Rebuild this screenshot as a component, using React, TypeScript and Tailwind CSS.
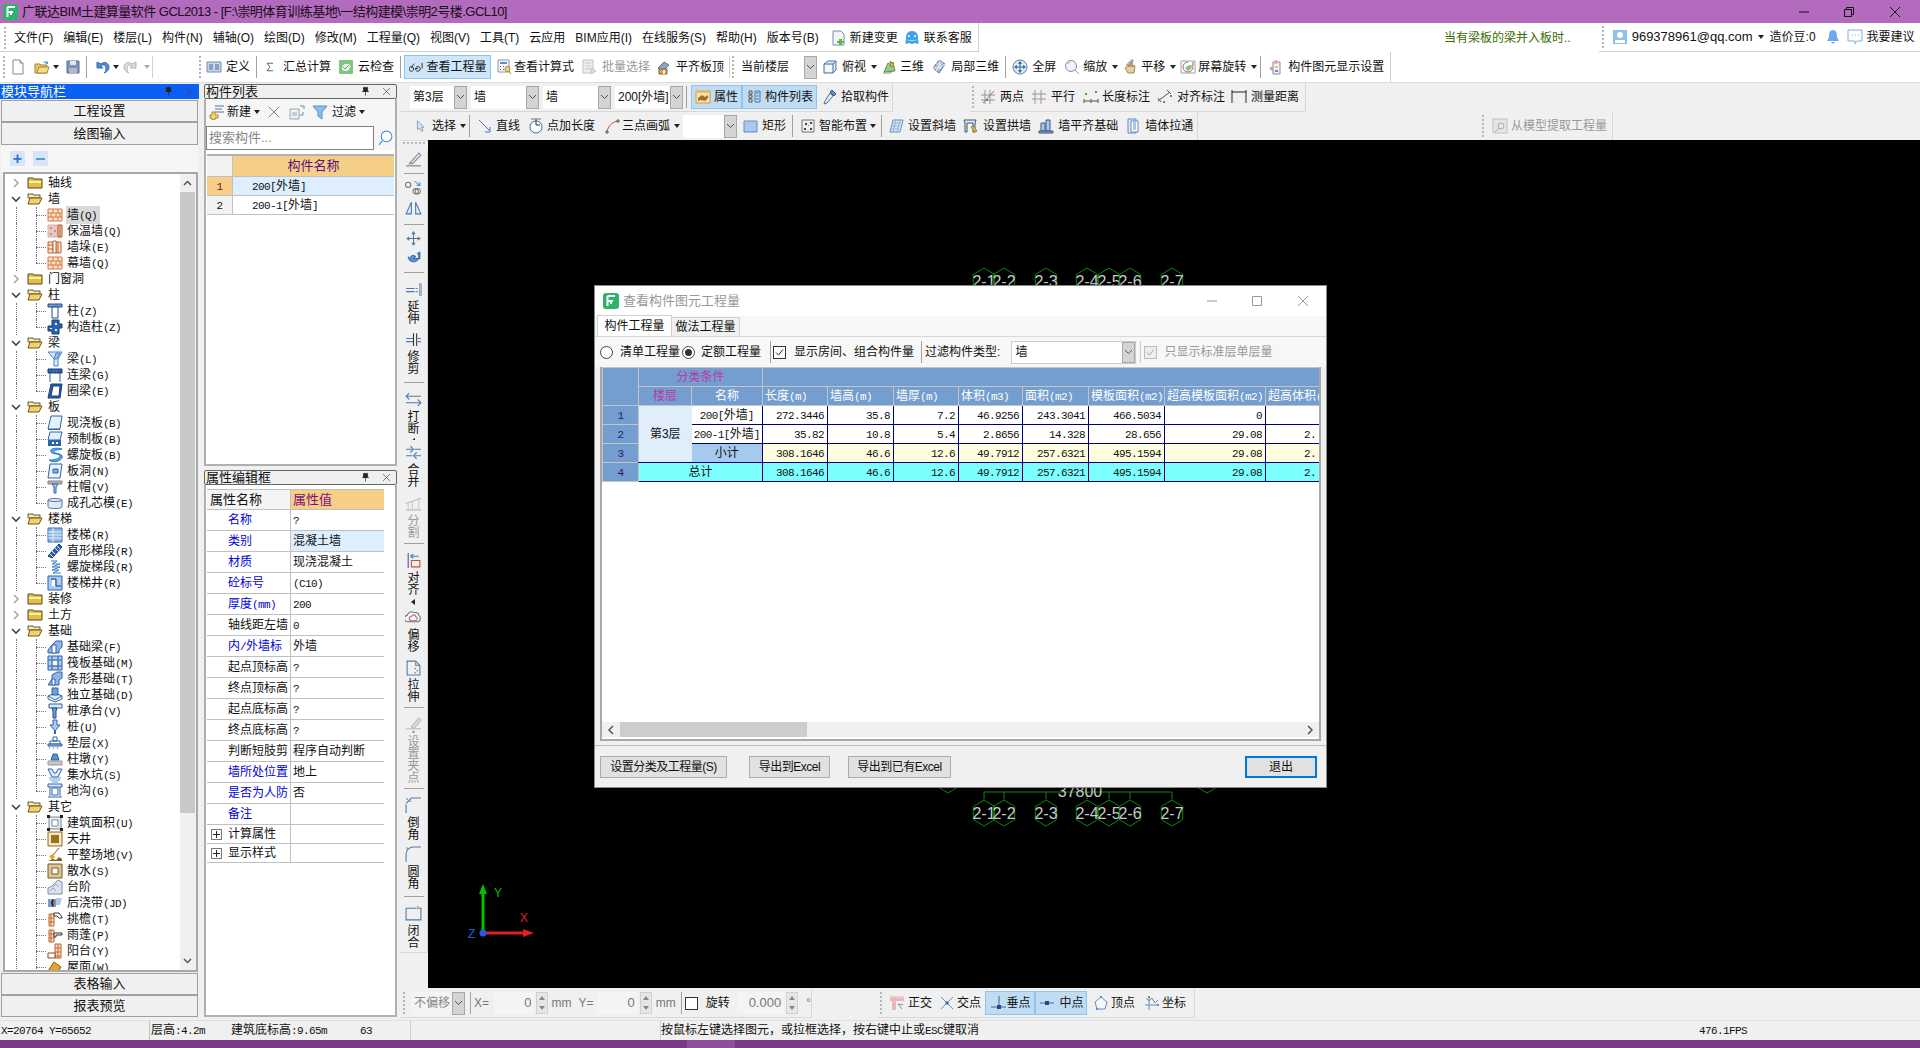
import React from "react";

type PD = [string, string?, string?];
const IC: Record<string, PD[]> = {
  newdoc: [["M3 1h7l3 3v11H3z", "#fff", "#888"], ["M10 1v3h3", "#eee", "#888"]],
  open: [["M1 5h5l1 1h6v8H1z", "#e9c46a", "#a8862a"], ["M3 14l2-6h10l-2 6z", "#f6dc8e", "#a8862a"], ["M9 4c1-2 3-2 4-1l1-1v3h-3l1-1c-1-1-2 0-3 0z", "#5b9bd5"]],
  save: [["M2 2h12v12H2z", "#7f93b8", "#5a6c8f"], ["M5 2h6v4H5z", "#dfe6f0"], ["M4 9h8v5H4z", "#aebad0"]],
  undo: [["M3 3v6h6L7 7c2-2 5-1 5 3 0 2-1 3-2 4 3-1 5-3 5-6 0-4-5-6-8-3z", "#4f8fd0", "#3a70a8", ]],
  redo: [["M13 3v6H7l2-2c-2-2-5-1-5 3 0 2 1 3 2 4-3-1-5-3-5-6 0-4 5-6 8-3z", "#d8dde2", "#b0b6bc"]],
  def: [["M1 3h14v10H1z", "#c8d8ec", "#6f8fb8"], ["M3 6h4M3 8h4M3 10h4M9 6h4M9 8h4M9 10h4", "none", "#4a6a98"]],
  sigma: [["M12 3H4l4 5-4 5h8", "none", "#333", ]],
  cloud: [["M2 1h12a1 1 0 011 1v12a1 1 0 01-1 1H2a1 1 0 01-1-1V2a1 1 0 011-1z", "#7fc47f"], ["M4 9c0-3 3-5 6-4 2 0 3 2 2 4s-2 3-4 3-4 0-4-3z", "#eaf7ea"], ["M5 8l2 2 4-4", "none", "#59a859"]],
  glasses: [["M5 9.500a2.500 2.500 0 100 .01zM12 9.500a2.500 2.500 0 100 .01z", "none", "#222"], ["M7.500 9h2M3 9c0-2 1-4 3-5M14 9V3", "none", "#222"]],
  calc: [["M2 1h11v12H2z", "#f4f6fa", "#8a93a5"], ["M4 3h7v2H4z", "#5f8fc4"], ["M4 7h1v1H4zM7 7h1v1H7zM10 7h1v1h-1zM4 10h1v1H4zM7 10h1v1H7z", "#666"], ["M9 10a2.500 2.500 0 105 0 2.500 2.500 0 10-5 0z", "#f6d77a", "#a8862a"], ["M13 12l2 3", "none", "#a8862a"]],
  batch: [["M2 1h10v13H2z", "#eee", "#c2c2c2"], ["M4 4h6M4 7h6M4 10h6", "none", "#c8c8c8"], ["M10 9l5 3-5 3z", "#ddd", "#c4c4c4"]],
  flat: [["M2 9l6-6 5 3-6 6z", "#8ea6c4", "#60738e"], ["M3 10h8v5H3z", "#d6a35c", "#8c6228"], ["M7 11h2v4H7z", "#f3efe0"]],
  cube: [["M2 5l4-3h8v9l-3 3H2z", "#dce9f6", "#50729c"], ["M2 5h9v9M11 5l3-3", "none", "#50729c"], ["M3 6h7v7H3z", "#f2f7fc"]],
  three: [["M3 13l4-9 3 2 2-3 2 9z", "#9cc98a", "#5c8f4a"], ["M9 2l4 4-3 2z", "#e8c85c", "#9a7d20"], ["M2 14h8v-3", "none", "#8c8c8c"]],
  local: [["M8 1l6 4-6 9-6-5z", "#a8bdd4", "#5a7596"], ["M8 1l1 8-7 0M9 9l5-4M5 3l4 6M11 3l-6 9", "none", "#e8eff6"]],
  full: [["M8 1a7 7 0 100 14A7 7 0 108 1z", "#dde8f5", "#5f7fa8"], ["M8 3v10M3 8h10", "none", "#3a66a0"], ["M8 2l2 3H6zM8 14l2-3H6zM2 8l3-2v4zM14 8l-3-2v4z", "#3a66a0"]],
  zoom: [["M7 1.500a5.500 5.500 0 100 11 5.500 5.500 0 100-11z", "#eef4fb", "#7d8fa8"], ["M11 11l4 4", "none", "#b89a50"], ["M4 5a3 3 0 012-2", "none", "#8cb0d8"]],
  hand: [["M3 9l2-1V5l1 0 1 3V3l1 0 1 5V3h1l1 5 1-2 1 1-1 7H6z", "#e8cfa0", "#a08858"], ["M10 0v4M8 2h4", "none", "#7d8fa8"]],
  spin: [["M1 2h14v12H1z", "#fff", "#7fa8d0"], ["M8 3a5 5 0 105 5", "none", "#d84f40"], ["M13 3v4H9", "none", "#d84f40"], ["M5 9l4-3 3 3-4 3z", "#7fc47f"]],
  disp: [["M5 3h7v12H5z", "#f2f2f8", "#8a8aa0"], ["M8 1a2 2 0 100 4 2 2 0 100-4z", "#e8a89c"], ["M7 7h3v2H7z", "#e8c85c"], ["M7 11h3v2H7z", "#5f8fc4"], ["M1 9l4-2v6z", "#c8a0a0"]],
  attr: [["M1 2h14v12H1z", "#ffe2a8", "#d09a40"], ["M3 9l4-3 3 2 3-2v3l-3 3-4-1-3 1z", "#9a7030"], ["M1 2h14v2H1z", "#f0b860"]],
  list: [["M3 2h3v3H3zM3 6h3v3H3zM3 10h3v3H3z", "none", "#555"], ["M9 2h5v11H9z", "none", "#5a7596"], ["M10 4h3M10 7h3M10 10h3", "none", "#5a7596"]],
  dropper: [["M11 1l4 4-2 2-4-4z", "#6f8fb8", "#40587c"], ["M9 4l3 3-6 7-3 1 1-3z", "#dce9f6", "#5a7596"]],
  two: [["M3 14L14 2", "none", "#d85050"], ["M1 6h14M1 11h14M5 1v14M10 1v14", "none", "#8a93a5"], ["M6 10h2v2H6z", "#50a050"]],
  para: [["M4 1v14M10 1v14", "none", "#d08080"], ["M1 5h14M1 10h14", "none", "#8a93c5"]],
  lenm: [["M1 12h14M1 10v4M15 10v4M8 10v4", "none", "#555"], ["M2 4h2v2H2zM12 2h2v2h-2z", "#50a050"]],
  alm: [["M1 12L13 3", "none", "#555", ], ["M10 1l4 4M1 9l3 4", "none", "#555"], ["M6 12h2v2H6zM13 6h2v2h-2z", "#50a050"]],
  meas: [["M1 3h14M1 1v13M15 1v13", "none", "#222"], ["M1 13h2M13 13h2", "none", "#bbb"]],
  cursor: [["M3 1v11l3-2 2 4 2-1-2-4h3z", "#dde8f5", "#7d8fa8"]],
  line: [["M2 2l11 11", "none", "#4a7ab0"], ["M13 9v5H8", "none", "#4a7ab0"]],
  ptlen: [["M8 3a6 6 0 10.01 0z", "#fff", "#3a66a0"], ["M8 1v6h4", "none", "#333"], ["M3 1h10", "none", "#777"]],
  arc: [["M2 14C3 8 7 4 13 3", "none", "#c05040"], ["M1 13h2v2H1zM12 2h2v2h-2z", "#fff", "#555"]],
  rect: [["M2 3h13v11H2z", "#a9c8f0", "#5f8fc4"]],
  smart: [["M2 2h12v12H2z", "none", "#777"], ["M5 5h2v2H5zM10 4h2v2h-2zM4 10h2v2H4zM10 10h2v2h-2z", "#444"], ["M8 7h1v1H8z", "#5080c0"]],
  slant: [["M5 2h10l-3 12H2z", "#dce9f6", "#5f8fc4"], ["M5 5h8M4 8h8M3 11h8M8 2l-3 12M12 2L9 14", "none", "#8fb0d8"]],
  arch: [["M2 2h12l-1 3v9h-2V5H5v9H3V5z", "#dce9f6", "#40587c"], ["M9 9l4 5 2-1-4-5z", "#e8c85c", "#9a7d20"]],
  walla: [["M3 5h4v8H3zM8 2h4v11H8z", "#a9c8f0", "#40587c"], ["M1 13h14v2H1z", "#7fa8d0", "#40587c"]],
  thru: [["M3 1h8v14H3z", "#dce9f6", "#5f8fc4"], ["M6 3h7v11H6z", "#fff", "#5f8fc4"], ["M8 5h3M8 7h3M8 9h3M8 11h3", "none", "#5f8fc4"]],
  model: [["M1 1h14v14H1z", "#e6e6e6", "#c0c0c0"], ["M9 5a3 3 0 100 6 3 3 0 100-6z", "none", "#aaa"], ["M7 10l-4 4", "none", "#aaa"]],
  plusnew: [["M6 2h9M6 5h7M6 8h9", "none", "#5a7596"], ["M3 8h3v3h3v3H6v2H3v-2H1v-3h2z", "#f0d878", "#a8862a"]],
  del: [["M2 2l12 12M14 2L2 14", "none", "#777"]],
  copy: [["M1 5h9v10H1z", "#f0f0f4", "#9aa"], ["M3 9h5M3 11h5", "none", "#9aa"], ["M11 2h4v3", "none", "#5f8fc4"], ["M14 8v3h-3", "none", "#5f8fc4"]],
  funnel: [["M1 2h14L10 8v7L6 12V8z", "#8fbce8", "#5f8fc4"]],
  search: [["M9 2a5 5 0 100 10 5 5 0 100-10z", "#fff", "#3e92dd"], ["M5 11l-3 4", "none", "#3e92dd"]],
  brush: [["M1 14h14", "none", "#777"], ["M5 11l8-9 2 2-8 8z", "#dde8f5", "#8a93a5"], ["M3 13l2-3 2 2z", "#c76a9a"]],
  offs: [["M3 3a2.500 2.500 0 100 5 2.500 2.500 0 100-5zM10 9a2.500 2.500 0 100 5 2.500 2.500 0 100-5zM12 9a2.500 2.500 0 100 5 2.500 2.500 0 100-5z", "none", "#777"], ["M9 2l5 4M14 3v3h-3", "none", "#5f8fc4"]],
  mirror: [["M6 3L1 14h5zM10 3l5 11h-5z", "#dce9f6", "#4a7ab0"]],
  move: [["M8 2v12M2 8h12", "none", "#5a7596"], ["M8 1l2 3H6zM8 15l2-3H6zM1 8l3-2v4zM15 8l-3-2v4z", "#5a7596"]],
  rot: [["M3 8a5 5 0 109-3l2-1v6h-6l2-2a3 3 0 10-2 5", "#5f9ad8", "#3a70a8"]],
  ext: [["M1 7h8M1 10h8", "none", "#4a7ab0"], ["M10 7h2M10 10h2", "none", "#888"], ["M14 2v12M16 2v12", "none", "#4a7ab0"]],
  trim: [["M1 7h7M1 10h7M12 7h3M12 10h3", "none", "#4a7ab0"], ["M8 2v12M11 2v12", "none", "#333"]],
  brk: [["M1 5h14M1 11h14", "none", "#4a7ab0"], ["M4 2l-3 3 3 3M12 8l3 3-3 3", "none", "#4a7ab0"]],
  merge: [["M1 11h6M9 11h6M1 5h6M9 5h6", "none", "#4a7ab0"], ["M5 2l3 3-3 3M11 8l-3 3 3 3", "none", "#4a7ab0"]],
  split: [["M1 14h14M1 8l14-5", "none", "#bbb"], ["M3 8v6M13 4v10M7 6v8", "none", "#ccc"]],
  alignv: [["M3 1v14", "none", "#4a50a0"], ["M5 4h8M5 4l3-2M5 4l3 2", "none", "#4a7ab0"], ["M6 8h8v6H6z", "none", "#c05040"]],
  offc: [["M3 12a3 3 0 01-1-6c1-3 4-4 6-3 3 0 5 1 5 3 2 1 2 6-1 6z", "#f4f7fb", "#5a7596"], ["M6 11a2 2 0 010-4c1-2 4-2 4 0 2 0 2 4 0 4z", "none", "#d06050"]],
  stretch: [["M2 2h8l4 4v9H2z", "none", "#4a7ab0"], ["M10 2v4h4", "none", "#888"], ["M9 9h1M11 11h1M9 13h1", "none", "#333"]],
  gripv: [["M1 12h14", "none", "#bbb"], ["M6 10l7-8 2 2-7 8z", "#ddd", "#bbb"], ["M7 14h2v2H7z", "#999"]],
  cham: [["M1 15V7M1 4h0M1 6l5-5h9", "none", "#4a7ab0"], ["M1 2h2M4 4h2", "none", "#888"]],
  fill: [["M1 15V8C1 4 4 1 8 1h7", "none", "#4a7ab0"], ["M1 2h2", "none", "#888"]],
  closeg: [["M1 3h14v11H1z", "none", "#4a7ab0"], ["M10 3h3", "none", "#eee"], ["M12 1v3", "none", "#888"]],
  ortho: [["M1 2h14M4 2v13", "none", "#e8a8a8"], ["M1 3h14v3H7v9H3V6H1z", "#e8b8b8"], ["M9 9l4 5M9 9l5 1", "none", "#7d8fa8"]],
  cross: [["M2 2l12 12M14 2L2 14", "none", "#5f8fc4"], ["M6 8l2-2 2 2-2 2z", "#3a66a0"]],
  perp: [["M1 12h15", "none", "#3a66a0"], ["M9 1v11", "none", "#3a66a0"], ["M7 10h4v4H7z", "#224a88"]],
  mid: [["M1 8h14", "none", "#3a66a0"], ["M6 6h4v4H6z", "#224a88"]],
  vert: [["M8 2l6 5-2 7H4L2 7z", "#f4f7fb", "#5f8fc4"], ["M7 1h2v2H7zM3 13h2v2H3z", "#5f8fc4"]],
  coord: [["M5 15V2M1 10h14", "none", "#5f8fc4"], ["M2 3l3 3 3-3 3 5 3-3", "none", "#888"], ["M4 1h2v2H4zM13 9h2v2h-2z", "#5f8fc4"]],
  user: [["M1 1h14v14H1z", "#8fc2e8"], ["M8 3a2.500 2.500 0 100 6 2.500 2.500 0 100-6z", "#fff"], ["M3 11h10v3H3z", "#fff"]],
  bell: [["M8 1c3 0 4 3 4 6 0 2 1 3 2 5H2c1-2 2-3 2-5 0-3 1-6 4-6z", "#6ea8ee"], ["M6 13h4l-2 2z", "#6ea8ee"]],
  bubble: [["M1 1h14v11h-5l-2 3v-3H1z", "#fff", "#7fb0e0"], ["M5 6h1M8 6h1M11 6h1", "none", "#7fb0e0"]],
  newchg: [["M3 1h8l3 3v11H3z", "#f2f6fb", "#6f8fb8"], ["M9 9h3v2h2v2h-2v2H9v-2H7v-2h2z", "#62b050"]],
  qq: [["M8 1c4 0 6 3 6 6 0 4 1 6 0 7l-3-1-3 1-3-1-3 1c-1-1 0-3 0-7 0-3 2-6 6-6z", "#3ea2e8"], ["M5 5a1 1 0 100 2 1 1 0 100-2zM11 5a1 1 0 100 2 1 1 0 100-2z", "#fff"], ["M3 9c3 2 7 2 10 0-2 3-8 3-10 0z", "#fff"]],
  brick: [["M1 2h14v12H1z", "#fbe3cf", "#d47a3c"], ["M1 6h14M1 10h14M6 2v4M11 2v4M4 6v4M9 6v4M13 6v4M6 10v4M11 10v4", "none", "#d47a3c"]],
  insul: [["M1 2h10v12H1z", "#e9c6c0", "#e0b0a8"], ["M3 4h2v2H3zM7 7h2v2H7zM3 10h2v2H3z", "#c9928a"], ["M11 2h4v12h-4zM13 2v12", "#f5d9c8", "#b05a28"]],
  pier: [["M1 3h5v11H1zM9 3h5v11H9z", "#fbe3cf", "#c0622a"], ["M6 2h3v12H6z", "#fff", "#c0622a"], ["M1 6h5M1 10h5M11 3v11", "none", "#c0622a"]],
  tcol: [["M1 1h14v3H1z", "#6f9fd8", "#224a88"], ["M5 4h6v11H5z", "#fff", "#224a88"]],
  gcol: [["M5 1h7v4h3v4h-3v6H5v-3H1V7h4z", "#2f62ad", "#163a78"], ["M8 4h2v2H8zM8 10h2v2H8zM3 9h2v1H3z", "#eaf2fb"]],
  beam: [["M1 1h14l-4 7v7H7V8z", "#dbeafb", "#4a86c8"], ["M9 2l-2 6 3 0 3-6z", "#8fc0ee", "#4a86c8"]],
  lbeam: [["M1 2h14v4H1z", "#2f62ad", "#163a78"], ["M3 6v9M13 6v9M6 3h1v2H6zM9 3h1v2H9z", "#eaf2fb", "#2f62ad"]],
  ring: [["M4 1h11l-2 14H1z", "#2f62ad", "#163a78"], ["M6 3h7l-1 10H4z", "#fff", "#163a78"]],
  slab: [["M4 1h11l-2 13H1z", "#e4f0fc", "#2f62ad"], ["M1 14h12v1H1z", "#2f62ad"]],
  preslab: [["M3 1h12l-2 8H1z", "#e4f0fc", "#2f62ad"], ["M1 9h13v6H1z", "#2f62ad"], ["M5 11h2v2H5zM9 11h2v2H9z", "#fff"]],
  spir: [["M15 2C8 0 2 2 4 5c2 3 9 1 9 4 0 3-7 4-11 4 3 3 11 2 13-2 2-5-7-4-8-6-1-2 4-2 8-3z", "#58a8ec", "#2878c8"]],
  hole: [["M3 1h12l-2 14H1z", "#eaf2fb", "#2f62ad"], ["M6 6h5v4H6z", "#7fb0e0", "#2f62ad"]],
  cap: [["M1 2h14v3H1z", "#b0b0b0", "#888"], ["M5 5h6l-2 3v6H7V8z", "#a8ccef", "#2f62ad"]],
  core: [["M1 5c0-2 14-2 14 0v7c0 2-14 2-14 0z", "#dceafa", "#5a7596"], ["M1 5c0 2 14 2 14 0", "none", "#5a7596"]],
  stair: [["M1 1h14v14H1z", "#8fb6e4", "#3a6ab0"], ["M1 5h14M1 8h14M1 11h14M6 1v14", "none", "#eaf2fb"]],
  stairs: [["M1 13L12 1l3 3-10 11z", "#2f62ad", "#163a78"], ["M3 11l3 3M5 8l3 3M8 5l3 3M10 3l3 3", "none", "#eaf2fb"]],
  spirs: [["M4 2h6l-5 3h8l-8 3h8l-8 3h7l-6 3h8", "none", "#2f7ed0"]],
  well: [["M1 1h14v14H1z", "#a8ccef", "#2f62ad"], ["M4 4h5v7h5", "none", "#163a78"], ["M5 5h3v6H5z", "#fff"]],
  fbeam: [["M5 6l4-4h6v6l-3 3v3H1v-3z", "#8fb6e4", "#2f62ad"], ["M5 6h4v8H5z", "#fff", "#2f62ad"]],
  raft: [["M1 1h14v14H1z", "#a8ccef", "#2f62ad"], ["M1 5h14M1 11h14M5 1v14M11 1v14", "none", "#2f62ad"], ["M6 6h4v4H6z", "#fff"]],
  strip: [["M1 14l4-6V4l5-3h5v6l-3 2v5z", "#8fb6e4", "#2f62ad"], ["M5 8h3v6H5z", "#fff", "#2f62ad"]],
  iso: [["M1 9l7-3 7 3-7 4z", "#dbeafb", "#2f62ad"], ["M1 9v3l7 3 7-3V9", "none", "#2f62ad"], ["M5 1h6v7H5z", "#6f9fd8", "#2f62ad"]],
  pcap: [["M2 1h13v4H2z", "#dbeafb", "#2f62ad"], ["M5 5h5l-1 3v7H6V8z", "#6f9fd8", "#224a88"]],
  pile: [["M6 1h4v5h3l-5 6-5-6h3z", "#a8ccef", "#2f62ad"], ["M7 12h2v3H7z", "#2f62ad"]],
  pad: [["M6 2h4v4H6zM3 6h10v3H3z", "#fff", "#2f62ad"], ["M1 9h14v2H1z", "#8fb6e4", "#2f62ad"], ["M3 12l-1 2M7 12l-1 2M11 12l-1 2", "none", "#6f9fd8"]],
  dun: [["M6 3h4l2 6H4z", "#5f8fd0", "#2f62ad"], ["M1 10h14v4H1z", "#c8c8c8", "#999"]],
  sump: [["M1 2h4l2 4h2l2-4h4l-4 8H5z", "#dbeafb", "#2f62ad"], ["M2 11h12M3 13h10M5 15h6", "none", "#6f9fd8"]],
  trench: [["M1 1h14v3H1z", "#dbeafb", "#2f62ad"], ["M3 4v9M13 4v9M1 14h14", "none", "#2f62ad"], ["M5 5h6v7H5z", "#fff", "#2f62ad"]],
  area: [["M2 2h12v12H2z", "#e4e8f2", "#888"], ["M5 5h6v6H5z", "#fff", "#7d8fa8"], ["M0 0h3v3H0zM13 0h3v3h-3zM0 13h3v3H0zM13 13h3v3h-3z", "#222"]],
  sky: [["M1 1h14v14H1z", "#f6e8c4", "#8a6a20"], ["M4 4h8v8H4z", "#9a7418"]],
  site: [["M12 1L6 8", "none", "#7a5c20"], ["M2 9l4-2 2 3-3 3z", "#e0a820"], ["M1 14l5-2 3 1 3-3 3 2v2H1z", "#8a5a30"]],
  apron: [["M1 1h14v14H1z", "#dcc49a", "#7a5c20"], ["M5 5h6v6H5z", "#fff", "#7a5c20"]],
  steps: [["M1 15V9l4-2 6-6 4 2v12z", "#dbe4ee", "#7d8fa8"], ["M3 12l3-3 3 3M6 8l3-3 3 3", "none", "#8fa8c4"]],
  pour: [["M1 4h8v8H1z", "#6f9fd8"], ["M9 3h6l-2 7H9z", "#a8ccef"], ["M6 4c2 2 2 5 0 8-2-1-3-6 0-8z", "#3a2418"], ["M6 6h2v4H6z", "#d86030"]],
  eave: [["M2 3h5v12H2z", "#fbe3cf", "#c0622a"], ["M2 7h5M2 11h5M4 3v12", "none", "#c0622a"], ["M7 2h5l3 4v1h-3l-2-2H7z", "#fff", "#333"]],
  canopy: [["M2 3h5v12H2z", "#fbe3cf", "#c0622a"], ["M2 7h5M2 11h5M4 3v12", "none", "#c0622a"], ["M7 6h8v2H9v2H7z", "#fff", "#333"]],
  balc: [["M8 1h6v14H8z", "#fbe3cf", "#c0622a"], ["M8 5h6M8 9h6M8 13h6M11 1v14", "none", "#c0622a"], ["M1 10h7v5H1z", "#fff", "#8a4a20"]],
  roof: [["M1 12l6-9 7 5-3 5z", "#e8a030", "#8a5a10"], ["M1 12h10v3H1z", "#fff", "#888"], ["M13 11h1v3h-1z", "#c03030"]],
  pin: [["M5 2h6v6H5zM3 8h10M8 8v6", "#222", "#222"]],
  x: [["M3 3l10 10M13 3L3 13", "none", "#444"]],
};

function I({ n, s = 16, c = "" }: { n: string; s?: number; c?: string }) {
  return (
    <svg viewBox="0 0 16 16" width={s} height={s} className={`shrink-0 ${c}`}>
      {IC[n].map((p, i) => (
        <path key={i} d={p[0]} fill={p[1] ?? "none"} stroke={p[2] ?? "none"} strokeWidth={1} />
      ))}
    </svg>
  );
}
const Caret = ({ c = "" }: { c?: string }) => <span className={`shrink-0 w-0 h-0 border-x-[3px] border-x-transparent border-t-[4px] border-t-[#222] ${c}`} />;
const Sep = ({ c = "" }: { c?: string }) => <span className={`shrink-0 w-px h-[22px] bg-[#a0a0a0] ${c}`} />;
const Grip = ({ c = "" }: { c?: string }) => <span className={`shrink-0 w-[2px] h-[22px] border-l-2 border-dotted border-[#b5b5b5] ${c}`} />;
const Tx = ({ c = "", children }: { c?: string; children: React.ReactNode }) => <span className={`shrink-0 whitespace-nowrap ${c}`}>{children}</span>;

function Sim({ t, c = "" }: { t: string; c?: string }) {
  const parts = t.split(/([\x00-\x7f]+)/).filter(Boolean);
  return (
    <span className={`whitespace-pre ${c}`}>
      {parts.map((p, i) =>
        /^[\x00-\x7f]/.test(p) ? (
          <span key={i} className="font-['Liberation_Mono',monospace] text-[11px] tracking-[-0.6px]">{p}</span>
        ) : (
          <span key={i}>{p}</span>
        )
      )}
    </span>
  );
}

function Combo({ t, c = "", off = false }: { t: string; c?: string; off?: boolean }) {
  return (
    <div className={`shrink-0 h-[23px] flex items-center bg-white ${c}`}>
      <span className={`flex-1 min-w-0 overflow-hidden whitespace-nowrap pl-[3px] ${off ? "text-[#8a8a8a]" : ""}`}>{t}</span>
      <span className="w-[13px] h-full shrink-0 bg-[#d4d4d4] border border-[#a8a8a8] flex items-center justify-center">
        <svg width="9" height="6" viewBox="0 0 9 6"><path d="M1 1l3.500 3.500L8 1" fill="none" stroke="#555" /></svg>
      </span>
    </div>
  );
}

type Row = [number, string, string?];
const TREE: Row[] = [
  [0, "轴线"], [1, "墙"], [2, "墙(Q)", "brick"], [2, "保温墙(Q)", "insul"], [2, "墙垛(E)", "pier"], [3, "幕墙(Q)", "brick"],
  [0, "门窗洞"], [1, "柱"], [2, "柱(Z)", "tcol"], [3, "构造柱(Z)", "gcol"],
  [1, "梁"], [2, "梁(L)", "beam"], [2, "连梁(G)", "lbeam"], [3, "圈梁(E)", "ring"],
  [1, "板"], [2, "现浇板(B)", "slab"], [2, "预制板(B)", "preslab"], [2, "螺旋板(B)", "spir"], [2, "板洞(N)", "hole"], [2, "柱帽(V)", "cap"], [3, "成孔芯模(E)", "core"],
  [1, "楼梯"], [2, "楼梯(R)", "stair"], [2, "直形梯段(R)", "stairs"], [2, "螺旋梯段(R)", "spirs"], [3, "楼梯井(R)", "well"],
  [0, "装修"], [0, "土方"],
  [1, "基础"], [2, "基础梁(F)", "fbeam"], [2, "筏板基础(M)", "raft"], [2, "条形基础(T)", "strip"], [2, "独立基础(D)", "iso"], [2, "桩承台(V)", "pcap"], [2, "桩(U)", "pile"], [2, "垫层(X)", "pad"], [2, "柱墩(Y)", "dun"], [2, "集水坑(S)", "sump"], [3, "地沟(G)", "trench"],
  [1, "其它"], [2, "建筑面积(U)", "area"], [2, "天井", "sky"], [2, "平整场地(V)", "site"], [2, "散水(S)", "apron"], [2, "台阶", "steps"], [2, "后浇带(JD)", "pour"], [2, "挑檐(T)", "eave"], [2, "雨蓬(P)", "canopy"], [2, "阳台(Y)", "balc"], [2, "屋面(W)", "roof"],
];

function Folder({ open }: { open: boolean }) {
  return (
    <svg width="16" height="14" viewBox="0 0 16 14" className="shrink-0">
      {open ? (
        <>
          <path d="M1 2h5l1 1h6v3H1z" fill="#f4e6b8" stroke="#6a5a20" />
          <path d="M1 12l2-6h12l-3 6z" fill="#f2cf70" stroke="#6a5a20" />
        </>
      ) : (
        <>
          <path d="M1 2h5l1 1h8v9H1z" fill="#e6bc4c" stroke="#5a4a10" />
          <path d="M2 5h12v2H2z" fill="#fbeeb8" />
        </>
      )}
    </svg>
  );
}

function Tree() {
  return (
    <div className="flex-1 min-w-0 overflow-hidden bg-white pt-[1px]">
      {TREE.map((r, i) => {
        const [k, t, ic] = r;
        const sel = i === 2;
        if (k < 2)
          return (
            <div key={i} className="relative h-[16px] flex items-center">
              <span className="w-[22px] shrink-0 flex justify-center">
                <svg width="10" height="10" viewBox="0 0 10 10">
                  {k === 0 ? <path d="M3 1l4 4-4 4" fill="none" stroke="#aaa" strokeWidth="1.600" /> : <path d="M1 3l4 4 4-4" fill="none" stroke="#444" strokeWidth="1.600" />}
                </svg>
              </span>
              <Folder open={k === 1} />
              <Sim t={t} c="ml-[5px]" />
            </div>
          );
        return (
          <div key={i} className="relative h-[16px] flex items-center pl-[42px]">
            <span className="absolute left-[11px] top-0 bottom-0 border-l border-dotted border-[#777]" />
            <span className={`absolute left-[31px] top-0 border-l border-dotted border-[#777] ${k === 3 ? "h-[8px]" : "h-[16px]"}`} />
            <span className="absolute left-[31px] top-[8px] w-[10px] border-t border-dotted border-[#777]" />
            <I n={ic as string} />
            <Sim t={t} c={`ml-[3px] pl-[1px] pr-[3px] ${sel ? "bg-[#d9d9d9]" : ""}`} />
          </div>
        );
      })}
    </div>
  );
}

function PanelTitle({ t, blue }: { t: string; blue?: boolean }) {
  return (
    <div className={`h-[15px] shrink-0 flex items-center text-[13px] leading-[15px] ${blue ? "bg-[#0b5ff2] text-white" : "bg-[#efefef] border border-[#666] rounded-[2px]"}`}>
      <span className="flex-1 pl-[1px]">{t}</span>
      <I n="pin" s={11} />
      <I n="x" s={11} c="ml-[10px] mr-[4px]" />
    </div>
  );
}

function SideBtn({ t, c = "" }: { t: string; c?: string }) {
  return <div className={`shrink-0 mx-[1px] flex items-center justify-center border border-[#a0a0a0] bg-[#f0f0f0] text-[13px] ${c}`}>{t}</div>;
}

const PROPS: [string, string, boolean][] = [
  ["名称", "?", true], ["类别", "混凝土墙", true], ["材质", "现浇混凝土", true], ["砼标号", "(C10)", true], ["厚度(mm)", "200", true],
  ["轴线距左墙", "0", false], ["内/外墙标", "外墙", true], ["起点顶标高", "?", false], ["终点顶标高", "?", false], ["起点底标高", "?", false],
  ["终点底标高", "?", false], ["判断短肢剪", "程序自动判断", false], ["墙所处位置", "地上", true], ["是否为人防", "否", true], ["备注", "", true],
];

type VT = { n?: string; t?: string; off?: boolean; arrow?: boolean; c: string };
const VTOOLS: (VT | null)[] = [
  { n: "brush", c: "h-[19px]" }, null,
  { n: "offs", c: "h-[20px]" }, { n: "mirror", c: "h-[22px]" }, null,
  { n: "move", c: "h-[18px]" }, { n: "rot", c: "h-[21px]" }, null,
  { n: "ext", t: "延伸", c: "h-[50px]" }, { n: "trim", t: "修剪", c: "h-[51px]" }, null,
  { n: "brk", t: "打断", arrow: true, c: "h-[53px]" }, { n: "merge", t: "合并", c: "h-[51px]" },
  { n: "split", t: "分割", off: true, c: "h-[48px]" }, null,
  { n: "alignv", t: "对齐", arrow: true, c: "h-[57px]" }, { n: "offc", t: "偏移", c: "h-[50px]" }, { n: "stretch", t: "拉伸", c: "h-[48px]" }, null,
  { n: "gripv", t: "设置夹点", off: true, c: "h-[72px]" }, null,
  { n: "cham", t: "倒角", c: "h-[49px]" }, { n: "fill", t: "圆角", c: "h-[50px]" }, null,
  { n: "closeg", t: "闭合", c: "h-[50px]" },
];

function VToolbar() {
  return (
    <div className="w-[28px] shrink-0 h-full bg-[#f0f0f0] border-t border-[#ddd]">
      <div className="h-[8px] mx-[3px] border-t-2 border-dotted border-[#bbb] mt-[1px]" />
      <div className="border-r border-b border-[#d8d8d8] pb-[1px]">
        {VTOOLS.map((v, i) =>
          v === null ? (
            <div key={i} className="h-[9px] flex items-center justify-center shrink-0"><span className="w-[20px] h-px bg-[#a0a0a0]" /></div>
          ) : (
            <div key={i} className={`flex flex-col items-center overflow-hidden ${v.t ? "pt-[4px]" : "pt-[1px]"} ${v.c}`}>
              <I n={v.n as string} s={17} />
              {v.t && (
                <div className={`mt-[3px] flex flex-col items-center text-[12px] leading-[12px] ${v.off ? "text-[#999]" : ""}`}>
                  {v.t.split("").map((ch, j) => <span key={j}>{ch}</span>)}
                  {v.arrow && <span className="mt-[3px] w-0 h-0 border-y-[3px] border-y-transparent border-r-[4px] border-r-[#222]" />}
                </div>
              )}
            </div>
          )
        )}
      </div>
    </div>
  );
}

function Spin({ c = "" }: { c?: string }) {
  return (
    <span className={`shrink-0 w-[12px] h-[22px] flex flex-col bg-[#e6e6e6] border border-[#d0d0d0] items-center justify-around ${c}`}>
      <span className="w-0 h-0 border-x-[3px] border-x-transparent border-b-[4px] border-b-[#888]" />
      <span className="w-0 h-0 border-x-[3px] border-x-transparent border-t-[4px] border-t-[#888]" />
    </span>
  );
}

const HEX_X = [984, 1004, 1046, 1087, 1109, 1130, 1172];
function hexPts(cx: number, cy: number) {
  const r = 13;
  return [0, 60, 120, 180, 240, 300].map((a) => {
    const t = ((a - 90) * Math.PI) / 180;
    return `${cx + r * 0.95 * Math.cos(t)},${cy + r * Math.sin(t)}`;
  }).join(" ");
}

function CanvasArt() {
  return (
    <svg className="absolute inset-0 w-full h-full" viewBox="428 140 1492 848">
      {[281, 813].map((cy) => (
        <g key={cy}>
          {HEX_X.map((x, i) => (
            <g key={x}>
              <polygon points={hexPts(x, cy)} fill="none" stroke="#0a8a0a" />
              <text x={x} y={cy + 6} fill="#c8c8c8" fontSize="16" textAnchor="middle" fontFamily="Liberation Sans">{`2-${i + 1}`}</text>
            </g>
          ))}
        </g>
      ))}
      <path d="M984 792H1172M984 792v7M1004 792v7M1046 792v7M1087 792v7M1109 792v7M1130 792v7M1172 792v7" stroke="#0a8a0a" fill="none" />
      <text x="1080" y="797" fill="#c8c8c8" fontSize="16" textAnchor="middle" fontFamily="Liberation Sans">37800</text>
      <polygon points={hexPts(948, 780)} fill="none" stroke="#0a8a0a" />
      <polygon points={hexPts(1207, 780)} fill="none" stroke="#0a8a0a" />
      <path d="M483 933V890" stroke="#00c000" strokeWidth="3" />
      <path d="M483 884l-4 10h8z" fill="#00c000" />
      <path d="M484 933H524" stroke="#e02020" strokeWidth="3" />
      <path d="M534 933l-11-4v8z" fill="#e02020" />
      <circle cx="483" cy="933" r="3.500" fill="#2060e0" />
      <text x="494" y="897" fill="#00c000" fontSize="12" fontFamily="Liberation Sans">Y</text>
      <text x="520" y="922" fill="#e02020" fontSize="12" fontFamily="Liberation Sans">X</text>
      <text x="468" y="938" fill="#2060e0" fontSize="12" fontFamily="Liberation Sans">Z</text>
    </svg>
  );
}

const TH = "border border-[#c4c4c4] font-normal text-white whitespace-nowrap overflow-hidden text-left px-[2px]";
const TD = "border-r border-b border-[#00007a] text-right pr-[3px] whitespace-nowrap overflow-hidden";
const NUM = "bg-[#739ecf] border border-[#c4c4c4] text-center text-[#2a1a70]";
const BODY: string[][] = [
  ["272.3446", "35.8", "7.2", "46.9256", "243.3041", "466.5034", "0", ""],
  ["35.82", "10.8", "5.4", "2.8656", "14.328", "28.656", "29.08", "2."],
  ["308.1646", "46.6", "12.6", "49.7912", "257.6321", "495.1594", "29.08", "2."],
  ["308.1646", "46.6", "12.6", "49.7912", "257.6321", "495.1594", "29.08", "2."],
];
const COLS = ["w-[36px]", "w-[53px]", "w-[71px]", "w-[65px]", "w-[66px]", "w-[65px]", "w-[64px]", "w-[66px]", "w-[76px]", "w-[101px]", "w-[54px]"];

function QtyTable() {
  const heads = ["长度(m)", "墙高(m)", "墙厚(m)", "体积(m3)", "面积(m2)", "模板面积(m2)", "超高模板面积(m2)", "超高体积(m3)"];
  const cell = (r: number, bg: string) => BODY[r].map((v, i) => (
    <td key={i} className={`${TD} ${bg}`}><Sim t={v} /></td>
  ));
  return (
    <table className="table-fixed border-collapse w-[717px] text-[12px] leading-[14px] bg-white">
      <colgroup>
        {COLS.map((w, i) => <col key={i} className={w} />)}
      </colgroup>
      <tbody>
        <tr className="h-[19px] bg-[#739ecf]">
          <th rowSpan={2} className={TH} />
          <th colSpan={2} className={`${TH} !text-center !text-[#b83aa0]`}>分类条件</th>
          <th colSpan={8} className={TH} />
        </tr>
        <tr className="h-[19px] bg-[#739ecf]">
          <th className={`${TH} !text-center !text-[#b83aa0]`}>楼层</th>
          <th className={`${TH} !text-center`}>名称</th>
          {heads.map((h) => <th key={h} className={TH}><Sim t={h} /></th>)}
        </tr>
        <tr className="h-[19px]">
          <td className={NUM}><Sim t="1" /></td>
          <td rowSpan={3} className="bg-[#e0eefc] text-center border-b border-[#00007a]">第3层</td>
          <td className={`${TD} !text-center !pr-0`}><Sim t="200[外墙]" /></td>
          {cell(0, "")}
        </tr>
        <tr className="h-[19px]">
          <td className={NUM}><Sim t="2" /></td>
          <td className={`${TD} !text-center !pr-0`}><Sim t="200-1[外墙]" /></td>
          {cell(1, "")}
        </tr>
        <tr className="h-[19px]">
          <td className={NUM}><Sim t="3" /></td>
          <td className={`${TD} !text-center !pr-0 bg-[#a6c9ee]`}>小计</td>
          {cell(2, "bg-[#fffde0]")}
        </tr>
        <tr className="h-[19px]">
          <td className={NUM}><Sim t="4" /></td>
          <td colSpan={2} className={`${TD} !text-center !pr-0 bg-[#7dffff]`}>总计</td>
          {cell(3, "bg-[#7dffff]")}
        </tr>
      </tbody>
    </table>
  );
}

function Modal() {
  return (
    <div className="absolute left-[166px] top-[145px] w-[733px] h-[503px] bg-[#f0f0f0] border border-[#8a8a8a] flex flex-col shadow-[0_0_4px_rgba(0,0,0,0.4)]">
      <div className="h-[30px] shrink-0 bg-white flex items-center pl-[8px] text-[13px] text-[#999]">
        <span className="w-[16px] h-[16px] rounded-[3px] bg-[#2fb36a] flex items-center justify-center">
          <svg width="10" height="12" viewBox="0 0 10 12"><path d="M1.500 1v10M1.500 1H9M1.500 6H7M5 6v3" stroke="#fff" strokeWidth="2" fill="none" /></svg>
        </span>
        <span className="ml-[4px] flex-1">查看构件图元工程量</span>
        <svg width="12" height="12" viewBox="0 0 12 12" className="mr-[33px]"><path d="M1 6h10" stroke="#999" /></svg>
        <svg width="12" height="12" viewBox="0 0 12 12" className="mr-[34px]"><path d="M1.500 1.500h9v9h-9z" stroke="#999" fill="none" /></svg>
        <svg width="12" height="12" viewBox="0 0 12 12" className="mr-[17px]"><path d="M1 1l10 10M11 1L1 11" stroke="#999" fill="none" /></svg>
      </div>
      <div className="h-[21px] shrink-0 flex items-end pl-[2px] border-b border-[#d8d8d8] bg-[#f7f7f7]">
        <div className="h-[21px] w-[75px] bg-white border border-b-0 border-[#d0d0d0] flex items-center justify-center">构件工程量</div>
        <div className="h-[19px] w-[68px] bg-[#f0f0f0] border border-b-0 border-l-0 border-[#d0d0d0] flex items-center justify-center">做法工程量</div>
      </div>
      <div className="h-[30px] shrink-0 flex items-center bg-[#f7f7f7]">
        <span className="ml-[5px] w-[13px] h-[13px] rounded-full border border-[#444] bg-white" />
        <Tx c="ml-[7px]">清单工程量</Tx>
        <span className="ml-[2px] w-[13px] h-[13px] rounded-full border border-[#444] bg-white flex items-center justify-center"><span className="w-[7px] h-[7px] rounded-full bg-[#333]" /></span>
        <Tx c="ml-[6px]">定额工程量</Tx>
        <Sep c="ml-[9px]" />
        <span className="ml-[2px] w-[13px] h-[13px] border border-[#333] bg-white flex items-center justify-center">
          <svg width="11" height="11" viewBox="0 0 11 11"><path d="M2 5.500l2.500 2.500L9 2.500" stroke="#222" fill="none" /></svg>
        </span>
        <Tx c="ml-[8px]">显示房间、组合构件量</Tx>
        <Sep c="ml-[7px]" />
        <Tx c="ml-[3px]">过滤构件类型:</Tx>
        <Combo t="墙" c="ml-[11px] w-[125px] border border-[#ccc]" />
        <Sep c="ml-[4px] !bg-[#ccc]" />
        <span className="ml-[3px] w-[13px] h-[13px] border border-[#bbb] bg-[#eee] flex items-center justify-center">
          <svg width="11" height="11" viewBox="0 0 11 11"><path d="M2 5.500l2.500 2.500L9 2.500" stroke="#aaa" fill="none" /></svg>
        </span>
        <Tx c="ml-[7px] text-[#999]">只显示标准层单层量</Tx>
      </div>
      <div className="flex-1 mx-[5px] border-b-2 border-x-2 border-[#a8a8a8] bg-white flex flex-col overflow-hidden">
        <div className="flex-1 overflow-hidden"><QtyTable /></div>
        <div className="h-[15px] shrink-0 mb-[2px] bg-[#f0f0f0] flex items-center">
          <svg width="18" height="12" viewBox="0 0 18 12" className="shrink-0"><path d="M11 2L7 6l4 4" stroke="#555" strokeWidth="1.500" fill="none" /></svg>
          <span className="w-[187px] h-full bg-[#cdcdcd]" />
          <span className="flex-1" />
          <svg width="18" height="12" viewBox="0 0 18 12" className="shrink-0"><path d="M7 2l4 4-4 4" stroke="#555" strokeWidth="1.500" fill="none" /></svg>
        </div>
      </div>
      <div className="h-[42px] shrink-0 mt-[4px] border-t border-[#c0c0c0] flex items-center pl-[5px] bg-[#f0f0f0]">
        {[["w-[127px]", "设置分类及工程量(S)"], ["w-[81px] ml-[22px]", "导出到Excel"], ["w-[103px] ml-[18px]", "导出到已有Excel"]].map(([w, t]) => (
          <div key={t} className={`h-[22px] border border-[#adadad] bg-[#e1e1e1] flex items-center justify-center tracking-[-0.5px] ${w}`}>{t}</div>
        ))}
        <div className="w-[72px] h-[22px] ml-[294px] border-2 border-[#0078d7] bg-[#e1e1e1] flex items-center justify-center">退出</div>
      </div>
    </div>
  );
}

export default function App() {
  return (
    <div className="w-[1920px] h-[1048px] overflow-hidden flex flex-col bg-[#f0f0f0] text-[12px] text-[#111] font-['Liberation_Sans','Noto_Sans_CJK_SC',sans-serif]">
      {/* Title bar */}
      <div className="h-[23px] shrink-0 bg-[#b36bbd] flex items-center pl-[3px]">
        <span className="w-[15px] h-[16px] rounded-[2px] bg-[#2fb36a] flex items-center justify-center">
          <svg width="10" height="12" viewBox="0 0 10 12"><path d="M1.500 1v10M1.500 1H9M1.500 6H7M5 6v3" stroke="#fff" strokeWidth="2" fill="none" /></svg>
        </span>
        <span className="ml-[4px] flex-1 text-[13px] tracking-[-0.53px] text-[#1a0a1a] whitespace-nowrap">广联达BIM土建算量软件 GCL2013 - [F:\崇明体育训练基地\一结构建模\崇明2号楼.GCL10]</span>
        <svg width="12" height="12" viewBox="0 0 12 12" className="mr-[33px]"><path d="M1 6h10" stroke="#111" /></svg>
        <svg width="12" height="12" viewBox="0 0 12 12" className="mr-[34px]"><path d="M1.500 3.500h7v7h-7zM3.500 3.500v-2h7v7h-2" stroke="#111" fill="none" /></svg>
        <svg width="12" height="12" viewBox="0 0 12 12" className="mr-[19px]"><path d="M1 1l10 10M11 1L1 11" stroke="#111" fill="none" /></svg>
      </div>
      {/* Menu row */}
      <div className="h-[29px] shrink-0 bg-white flex items-center relative">
        <div className="h-full w-[979px] shrink-0 flex items-center pl-[4px] pt-[1px] border-r border-b border-[#d0d0d0]">
          <Grip />
          <div className="ml-[8px] flex items-center gap-[10px]">
            {["文件(F)", "编辑(E)", "楼层(L)", "构件(N)", "辅轴(O)", "绘图(D)", "修改(M)", "工程量(Q)", "视图(V)", "工具(T)", "云应用", "BIM应用(I)", "在线服务(S)", "帮助(H)", "版本号(B)"].map((m) => (
              <Tx key={m}>{m}</Tx>
            ))}
          </div>
          <I n="newchg" c="ml-[11px]" />
          <Tx c="ml-[4px]">新建变更</Tx>
          <I n="qq" c="ml-[6px]" />
          <Tx c="ml-[4px]">联系客服</Tx>
        </div>
        <Tx c="ml-[465px] text-[#3a6b00]">当有梁板的梁并入板时..</Tx>
        <div className="ml-[28px] h-full flex-1 flex items-center pl-[3px] border-b border-[#d0d0d0]">
          <Grip />
          <I n="user" c="ml-[8px]" />
          <Tx c="ml-[4px] text-[13px]">969378961@qq.com</Tx>
          <Caret c="ml-[5px]" />
          <Tx c="ml-[6px]">造价豆:0</Tx>
          <I n="bell" c="ml-[9px]" />
          <I n="bubble" c="ml-[6px]" />
          <Tx c="ml-[4px]">我要建议</Tx>
        </div>
      </div>
      {/* Tool row */}
      <div className="h-[31px] shrink-0 bg-white border-b border-[#dcdcdc] flex items-center">
        <Grip c="ml-[3px]" />
        <I n="newdoc" c="ml-[5px]" />
        <I n="open" c="ml-[8px]" />
        <Caret c="ml-[3px]" />
        <I n="save" c="ml-[6px]" />
        <Sep c="ml-[5px]" />
        <I n="undo" c="ml-[7px]" />
        <Caret c="ml-[3px]" />
        <I n="redo" c="ml-[4px]" />
        <Caret c="ml-[5px] !border-t-[#aaa]" />
        <Sep c="ml-[2px] !bg-[#d0d0d0]" />
        <Grip c="ml-[46px]" />
        <I n="def" c="ml-[5px]" />
        <Tx c="ml-[4px]">定义</Tx>
        <Sep c="ml-[6px]" />
        <I n="sigma" s={12} c="ml-[7px]" />
        <Tx c="ml-[7px]">汇总计算</Tx>
        <I n="cloud" c="ml-[7px]" />
        <Tx c="ml-[4px]">云检查</Tx>
        <Sep c="ml-[6px]" />
        <div className="ml-[3px] w-[87px] h-[24px] shrink-0 bg-[#cfe6f8] border border-[#8ec4ee] flex items-center justify-center gap-[3px]">
          <I n="glasses" s={15} />
          <span className="whitespace-nowrap">查看工程量</span>
        </div>
        <I n="calc" c="ml-[5px]" />
        <Tx c="ml-[2px]">查看计算式</Tx>
        <I n="batch" c="ml-[7px]" />
        <Tx c="ml-[5px] text-[#999]">批量选择</Tx>
        <I n="flat" c="ml-[6px]" />
        <Tx c="ml-[4px]">平齐板顶</Tx>
        <Sep c="ml-[5px] !bg-[#d0d0d0]" />
        <Grip c="ml-[2px]" />
        <Combo t="当前楼层" c="ml-[4px] w-[79px]" />
        <I n="cube" c="ml-[5px]" />
        <Tx c="ml-[4px]">俯视</Tx>
        <Caret c="ml-[5px]" />
        <I n="three" c="ml-[4px]" />
        <Tx c="ml-[3px]">三维</Tx>
        <I n="local" c="ml-[7px]" />
        <Tx c="ml-[4px]">局部三维</Tx>
        <Sep c="ml-[6px]" />
        <I n="full" c="ml-[6px]" />
        <Tx c="ml-[4px]">全屏</Tx>
        <I n="zoom" c="ml-[8px]" />
        <Tx c="ml-[3px]">缩放</Tx>
        <Caret c="ml-[5px]" />
        <I n="hand" c="ml-[4px]" />
        <Tx c="ml-[3px]">平移</Tx>
        <Caret c="ml-[5px]" />
        <I n="spin" c="ml-[4px]" />
        <Tx c="ml-[2px]">屏幕旋转</Tx>
        <Caret c="ml-[5px]" />
        <Sep c="ml-[3px]" />
        <I n="disp" c="ml-[7px]" />
        <Tx c="ml-[4px]">构件图元显示设置</Tx>
        <span className="ml-[6px] w-px h-full bg-[#d0d0d0]" />
      </div>
      {/* Body */}
      <div className="flex-1 min-h-0 flex">
        {/* Module nav */}
        <div className="w-[200px] shrink-0 flex flex-col pt-[1px] pr-[1px]">
          <PanelTitle t="模块导航栏" blue />
          <SideBtn t="工程设置" c="h-[22px] mt-[1px]" />
          <SideBtn t="绘图输入" c="h-[23px]" />
          <div className="h-[27px] shrink-0 flex items-center pl-[9px] gap-[8px] mx-[1px] bg-[#f6f6f6]">
            <span className="w-[15px] h-[15px] bg-[#d8e4f8] flex items-center justify-center text-[#2a78c8] text-[16px] leading-none font-bold">+</span>
            <span className="w-[15px] h-[15px] bg-[#d8e4f8] flex items-center justify-center"><span className="w-[9px] h-[2px] bg-[#5a9ad0]" /></span>
          </div>
          <div className="h-[800px] shrink-0 ml-[3px] mr-[1px] border-2 border-[#a8a8a8] flex overflow-hidden">
            <Tree />
            <div className="w-[15px] shrink-0 bg-[#f0f0f0] flex flex-col mr-[1px]">
              <div className="h-[18px] shrink-0 flex items-center justify-center">
                <svg width="9" height="6" viewBox="0 0 9 6"><path d="M1 5l3.500-3.500L8 5" stroke="#555" strokeWidth="1.500" fill="none" /></svg>
              </div>
              <div className="h-[621px] shrink-0 bg-[#c8c8c8]" />
              <div className="flex-1" />
              <div className="h-[18px] shrink-0 flex items-center justify-center">
                <svg width="9" height="6" viewBox="0 0 9 6"><path d="M1 1l3.500 3.500L8 1" stroke="#555" strokeWidth="1.500" fill="none" /></svg>
              </div>
            </div>
          </div>
          <SideBtn t="表格输入" c="h-[22px] mt-[1px]" />
          <SideBtn t="报表预览" c="h-[22px]" />
        </div>
        {/* Component column */}
        <div className="w-[200px] shrink-0 flex flex-col pl-[4px] pr-[3px] pt-[1px]">
          <PanelTitle t="构件列表" />
          <div className="h-[367px] shrink-0 bg-white border-x-2 border-b-2 border-[#b0b0b0] flex flex-col">
            <div className="h-[26px] shrink-0 flex items-center pl-[3px] bg-[#f6f6f6]">
              <I n="plusnew" />
              <Tx c="ml-[2px]">新建</Tx>
              <Caret c="ml-[3px]" />
              <I n="del" s={14} c="ml-[7px]" />
              <I n="copy" c="ml-[8px]" />
              <I n="funnel" c="ml-[7px]" />
              <Tx c="ml-[4px]">过滤</Tx>
              <Caret c="ml-[3px]" />
            </div>
            <div className="h-[25px] shrink-0 flex items-center bg-[#f6f6f6]">
              <div className="h-[24px] w-[168px] border border-[#808080] bg-white flex items-center pl-[2px] text-[#888] text-[13px]">搜索构件...</div>
              <I n="search" s={17} c="ml-[3px]" />
            </div>
            <div className="mt-[4px] mx-[1px] border-t-2 border-[#b0b0b0]">
              <div className="flex h-[21px] border-b border-[#c0c0c0]">
                <div className="w-[26px] bg-[#f2f2f2] border-r border-[#c0c0c0]" />
                <div className="flex-1 bg-[#f6cf86] flex items-center justify-center text-[13px] text-[#5a1080]">构件名称</div>
              </div>
              <div className="flex h-[19px] border-b border-[#c0c0c0]">
                <div className="w-[26px] bg-[#f6cf86] border-r border-[#c0c0c0] flex items-center justify-center text-[#7a1010]"><Sim t="1" /></div>
                <div className="flex-1 bg-[#ddeeff] pl-[19px] flex items-center"><Sim t="200[外墙]" /></div>
              </div>
              <div className="flex h-[19px] border-b border-[#c0c0c0]">
                <div className="w-[26px] bg-[#f2f2f2] border-r border-[#c0c0c0] flex items-center justify-center"><Sim t="2" /></div>
                <div className="flex-1 pl-[19px] flex items-center"><Sim t="200-1[外墙]" /></div>
              </div>
            </div>
          </div>
          <div className="h-[4px] shrink-0" />
          <PanelTitle t="属性编辑框" />
          <div className="h-[532px] shrink-0 bg-white border-x-2 border-b-2 border-[#b0b0b0] pt-[4px] pl-[1px] pr-[11px]">
            <div className="flex h-[21px] border-y border-[#c0c0c0]">
              <div className="w-[84px] shrink-0 bg-[#f4f4f4] border-r border-[#c0c0c0] flex items-center pl-[3px] text-[13px]">属性名称</div>
              <div className="flex-1 bg-[#f6cf86] flex items-center pl-[2px] text-[13px] text-[#7a1080]">属性值</div>
            </div>
            {PROPS.map(([k, v, blue], i) => (
              <div key={k} className="flex h-[21px] border-b border-[#c0c0c0]">
                <div className={`w-[84px] shrink-0 border-r border-[#c0c0c0] flex items-center pl-[21px] whitespace-nowrap ${blue ? "text-[#0000e0]" : ""}`}><Sim t={k} /></div>
                <div className={`flex-1 flex items-center pl-[2px] ${i === 1 ? "bg-[#ddeeff]" : ""}`}><Sim t={v} /></div>
              </div>
            ))}
            {["计算属性", "显示样式"].map((k) => (
              <div key={k} className="flex h-[19px] border-b border-[#c0c0c0]">
                <div className="w-[84px] shrink-0 border-r border-[#c0c0c0] flex items-center pl-[4px]">
                  <span className="w-[11px] h-[11px] border border-[#777] flex items-center justify-center relative">
                    <svg width="9" height="9" viewBox="0 0 9 9"><path d="M1 4.500h7M4.500 1v7" stroke="#222" /></svg>
                  </span>
                  <span className="ml-[6px] whitespace-nowrap">{k}</span>
                </div>
                <div className="flex-1" />
              </div>
            ))}
          </div>
        </div>
        {/* Right column */}
        <div className="flex-1 min-w-0 flex flex-col">
          <div className="h-[29px] shrink-0 flex items-center">
            <div className="w-[493px] h-full shrink-0 flex items-center border-r border-b border-[#d8d8d8]">
              <Combo t="第3层" c="ml-[10px] w-[57px]" />
              <Combo t="墙" c="ml-[4px] w-[68px]" />
              <Combo t="墙" c="ml-[4px] w-[68px]" />
              <Combo t="200[外墙]" c="ml-[4px] w-[68px]" />
              <Sep c="ml-[3px]" />
              <div className="ml-[4px] w-[51px] h-[24px] shrink-0 bg-[#bfdcf3] border border-[#8ec4ee] flex items-center justify-center gap-[3px]"><I n="attr" /><span>属性</span></div>
              <div className="w-[75px] h-[24px] shrink-0 bg-[#bfdcf3] border border-[#8ec4ee] flex items-center justify-center gap-[3px]"><I n="list" /><span className="whitespace-nowrap">构件列表</span></div>
              <I n="dropper" c="ml-[4px]" />
              <Tx c="ml-[4px]">拾取构件</Tx>
            </div>
            <div className="ml-[77px] w-[336px] h-full shrink-0 flex items-center border-r border-b border-[#d8d8d8]">
              <Grip c="ml-[2px]" />
              <I n="two" c="ml-[6px]" />
              <Tx c="ml-[4px]">两点</Tx>
              <I n="para" c="ml-[7px]" />
              <Tx c="ml-[4px]">平行</Tx>
              <I n="lenm" c="ml-[8px]" />
              <Tx c="ml-[3px]">长度标注</Tx>
              <I n="alm" c="ml-[7px]" />
              <Tx c="ml-[4px]">对齐标注</Tx>
              <I n="meas" c="ml-[6px]" />
              <Tx c="ml-[4px]">测量距离</Tx>
            </div>
          </div>
          <div className="h-[28px] shrink-0 flex items-center">
            <div className="w-[798px] h-full shrink-0 flex items-center border-r border-[#d8d8d8]">
              <I n="cursor" s={13} c="ml-[15px]" />
              <Tx c="ml-[4px]">选择</Tx>
              <Caret c="ml-[4px]" />
              <Sep c="ml-[3px]" />
              <I n="line" c="ml-[7px]" />
              <Tx c="ml-[3px]">直线</Tx>
              <I n="ptlen" c="ml-[8px]" />
              <Tx c="ml-[3px]">点加长度</Tx>
              <I n="arc" c="ml-[10px]" />
              <Tx c="ml-[1px]">三点画弧</Tx>
              <Caret c="ml-[4px]" />
              <Combo t="" c="ml-[3px] w-[54px]" />
              <I n="rect" c="ml-[5px]" />
              <Tx c="ml-[4px]">矩形</Tx>
              <Sep c="ml-[6px]" />
              <I n="smart" c="ml-[7px]" />
              <Tx c="ml-[3px]">智能布置</Tx>
              <Caret c="ml-[3px]" />
              <Sep c="ml-[5px]" />
              <I n="slant" c="ml-[6px]" />
              <Tx c="ml-[4px]">设置斜墙</Tx>
              <I n="arch" c="ml-[6px]" />
              <Tx c="ml-[5px]">设置拱墙</Tx>
              <I n="walla" c="ml-[7px]" />
              <Tx c="ml-[4px]">墙平齐基础</Tx>
              <I n="thru" c="ml-[7px]" />
              <Tx c="ml-[4px]">墙体拉通</Tx>
            </div>
            <div className="ml-[282px] w-[133px] h-full shrink-0 flex items-center border-r border-[#d8d8d8]">
              <Grip c="ml-[2px]" />
              <I n="model" c="ml-[8px]" />
              <Tx c="ml-[3px] text-[#999]">从模型提取工程量</Tx>
            </div>
          </div>
          <div className="h-[848px] shrink-0 flex">
            <VToolbar />
            <div className="flex-1 bg-black relative overflow-hidden">
              <CanvasArt />
              <Modal />
            </div>
          </div>
          <div className="h-[32px] shrink-0 flex items-start pt-[1px]">
            <div className="w-[412px] h-[29px] shrink-0 flex items-center border-r border-b border-[#d8d8d8]">
              <Grip c="ml-[3px]" />
              <Combo t="不偏移" off c="ml-[6px] w-[54px] !bg-[#f4f4f4]" />
              <Sep c="ml-[5px]" />
              <Tx c="ml-[3px] text-[#777] w-[20px]">X=</Tx>
              <span className="w-[41px] h-[22px] bg-[#f4f4f4] text-[#777] flex items-center justify-end pr-[3px] text-[13px]">0</span>
              <Spin c="ml-[2px]" />
              <Tx c="ml-[3px] text-[#777] w-[27px]">mm</Tx>
              <Tx c="text-[#777] w-[19px]">Y=</Tx>
              <span className="w-[41px] h-[22px] bg-[#f4f4f4] text-[#777] flex items-center justify-end pr-[3px] text-[13px]">0</span>
              <Spin c="ml-[2px]" />
              <Tx c="ml-[4px] text-[#777] w-[25px]">mm</Tx>
              <Sep />
              <span className="ml-[3px] w-[13px] h-[13px] border border-[#333] bg-white shrink-0" />
              <Tx c="ml-[8px]">旋转</Tx>
              <span className="ml-[7px] w-[48px] h-[22px] bg-[#f4f4f4] text-[#777] flex items-center justify-end pr-[3px] text-[13px]">0.000</span>
              <Spin c="ml-[2px]" />
              <Tx c="ml-[8px] text-[#777]">°</Tx>
            </div>
            <div className="ml-[66px] w-[317px] h-[29px] shrink-0 flex items-center border-r border-b border-[#d8d8d8]">
              <Grip c="ml-[2px]" />
              <I n="ortho" c="ml-[7px]" />
              <Tx c="ml-[3px]">正交</Tx>
              <I n="cross" c="ml-[7px]" />
              <Tx c="ml-[2px]">交点</Tx>
              <div className="ml-[4px] w-[50px] h-[24px] shrink-0 bg-[#bfdcf3] border border-[#8ec4ee] flex items-center justify-center gap-[1px]"><I n="perp" /><span>垂点</span></div>
              <div className="w-[52px] h-[24px] shrink-0 bg-[#bfdcf3] border border-[#8ec4ee] flex items-center justify-center gap-[5px]"><I n="mid" /><span>中点</span></div>
              <I n="vert" c="ml-[6px]" />
              <Tx c="ml-[2px]">顶点</Tx>
              <I n="coord" c="ml-[9px]" />
              <Tx c="ml-[2px]">坐标</Tx>
            </div>
          </div>
        </div>
      </div>
      {/* Status bar */}
      <div className="h-[20px] shrink-0 flex items-center border-t border-[#e0e0e0]">
        <div className="w-[149px] shrink-0 pl-[1px]"><Sim t="X=20764 Y=65652" /></div>
        <div className="w-[82px] shrink-0 border-l border-[#c0c0c0] pl-[1px]"><Sim t="层高:4.2m" /></div>
        <div className="w-[129px] shrink-0"><Sim t="建筑底标高:9.65m" /></div>
        <div className="w-[50px] shrink-0"><Sim t="63" /></div>
        <div className="w-[250px] shrink-0 h-full border-l border-[#d0d0d0]" />
        <div className="w-[1039px] shrink-0 border-l border-[#d0d0d0] h-full flex items-center"><Sim t="按鼠标左键选择图元，或拉框选择，按右键中止或ESC键取消" /></div>
        <div className="flex-1"><Sim t="476.1FPS" /></div>
      </div>
      {/* Taskbar sliver */}
      <div className="h-[8px] shrink-0 bg-[#7a3a85] flex">
        <span className="ml-[687px] w-[48px] h-full bg-[#8e4f9c]" />
      </div>
    </div>
  );
}
